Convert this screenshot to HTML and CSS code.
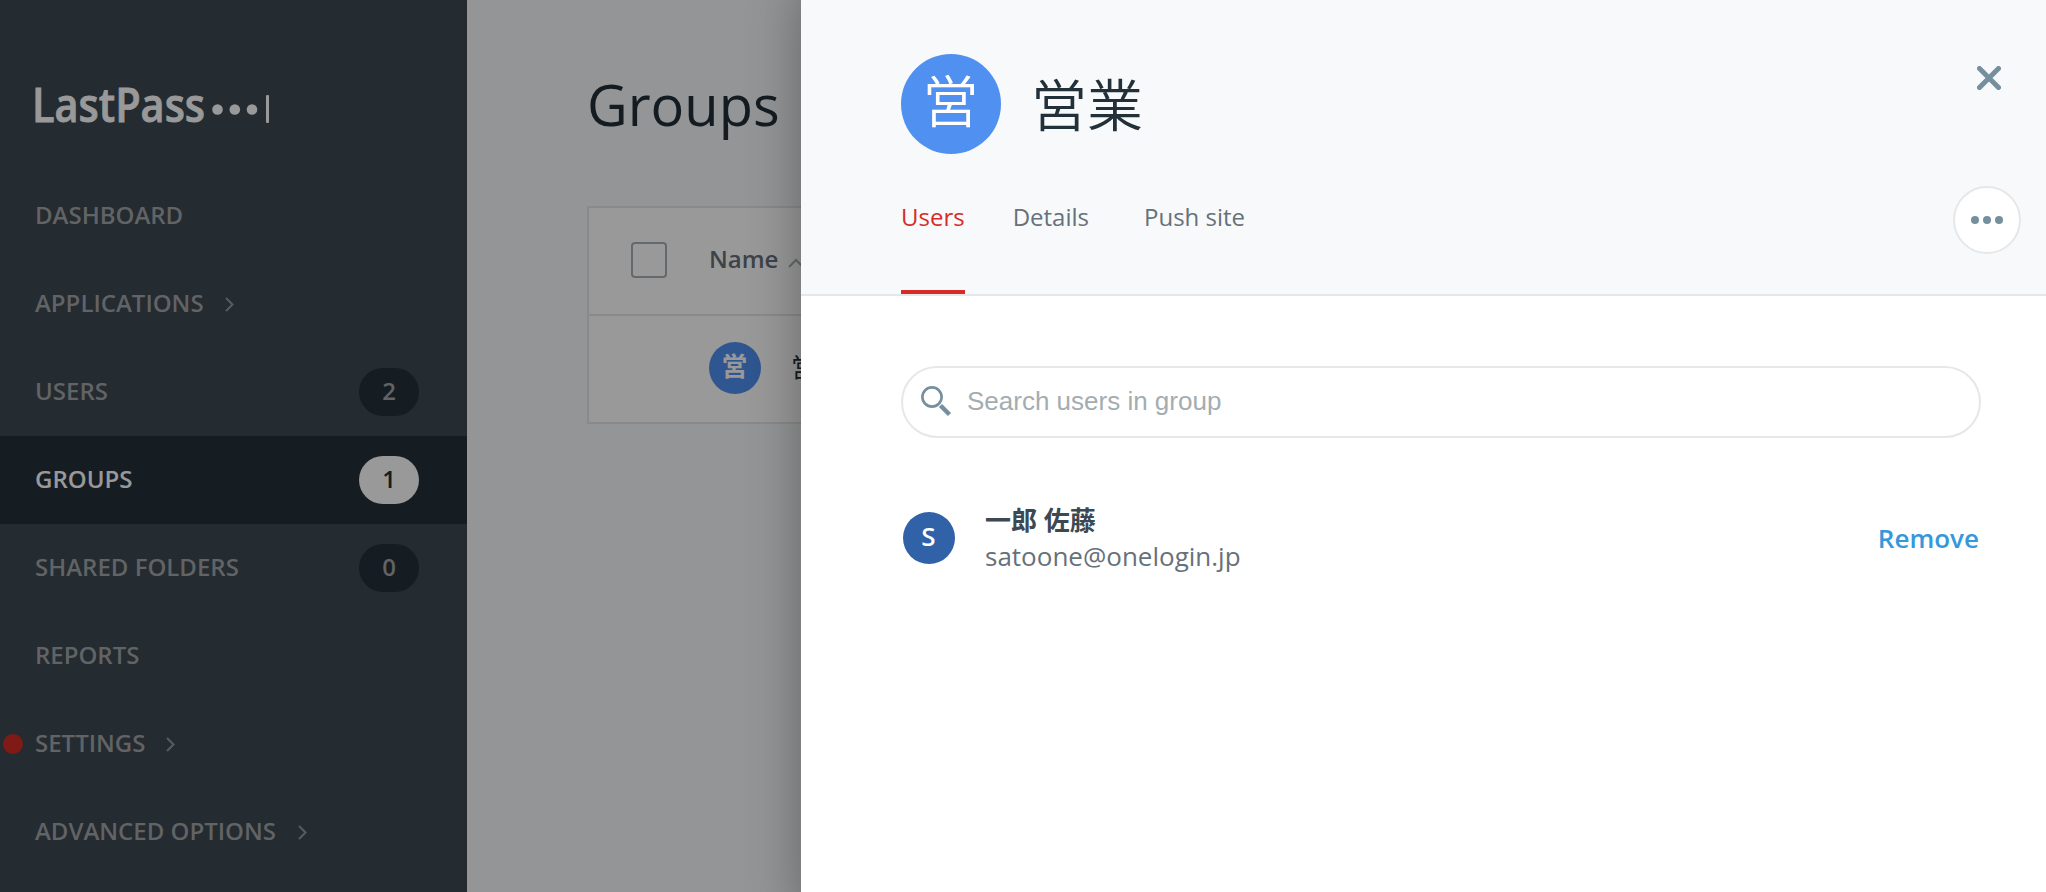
FILE: index.html
```
<!DOCTYPE html>
<html lang="en">
<head>
    <meta charset="UTF-8">
    <title>Groups</title>
    <link rel="stylesheet" href="styles.css">
</head>
<body>
    <div class="page">
        <div class="sidebar">
            <svg class="logo" width="250" height="80" viewBox="0 0 250 80">
                <text x="10" y="55.500" textLength="173" lengthAdjust="spacingAndGlyphs">LastPass</text>
                <circle cx="195.500" cy="43.500" r="5.300"/>
                <circle cx="212.800" cy="43.500" r="5.300"/>
                <circle cx="230" cy="43.500" r="5.300"/>
                <rect x="244" y="29" width="3" height="28" rx="1"/>
            </svg>
            <ul class="nav">
                <li>DASHBOARD</li>
                <li>APPLICATIONS <svg class="arrow" width="9" height="15" viewBox="0 0 9 15"><path d="M1 1l6.500 6.500L1 14"/></svg></li>
                <li>USERS <span class="count">2</span></li>
                <li class="active">GROUPS <span class="count">1</span></li>
                <li>SHARED FOLDERS <span class="count">0</span></li>
                <li>REPORTS</li>
                <li class="alert">SETTINGS <svg class="arrow" width="9" height="15" viewBox="0 0 9 15"><path d="M1 1l6.500 6.500L1 14"/></svg></li>
                <li>ADVANCED OPTIONS <svg class="arrow last" width="9" height="15" viewBox="0 0 9 15"><path d="M1 1l6.500 6.500L1 14"/></svg></li>
            </ul>
        </div>
        <div class="main">
            <h1>Groups</h1>
            <div class="table">
                <div class="row head">
                    <span class="checkbox"></span>
                    <span class="name">Name</span>
                    <svg class="sort" width="16" height="10" viewBox="0 0 16 10"><path d="M1 9l7-7 7 7"/></svg>
                </div>
                <div class="row">
                    <span class="avatar small">営</span>
                    <span class="group">営業</span>
                </div>
            </div>
        </div>
    </div>
    <div class="overlay"></div>
    <div class="drawer">
        <div class="drawer-head">
            <div class="title">
                <span class="avatar">営</span>
                <h2>営業</h2>
                <svg class="close" width="24" height="24" viewBox="0 0 24 24"><path d="M2.500 2.500l19 19M21.500 2.500l-19 19"/></svg>
            </div>
            <div class="tabs">
                <span class="tab current">Users</span>
                <span class="tab details">Details</span>
                <span class="tab">Push site</span>
                <span class="more"><i></i><i></i><i></i></span>
            </div>
        </div>
        <div class="drawer-body">
            <div class="search">
                <svg width="32" height="32" viewBox="0 0 32 32"><circle cx="12" cy="12" r="9.600"/><path class="handle" d="M20.500 20.500l9 9"/></svg>
                <input type="text" placeholder="Search users in group">
            </div>
            <div class="user">
                <span class="avatar small dark">S</span>
                <div class="info">
                    <div class="fullname">一郎 佐藤</div>
                    <div class="email">satoone@onelogin.jp</div>
                </div>
                <span class="remove">Remove</span>
            </div>
        </div>
    </div>
</body>
</html>
```

FILE: styles.css
```
*{
    padding: 0;
    margin: 0;
    box-sizing: border-box;
}
body {
    height: 892px;
    overflow: hidden;
    position: relative;
    font-family: "Open Sans", "Noto Sans CJK JP", sans-serif;
    font-size: 24px;
    color: #22303a;
}
.page {
    display: flex;
    height: 892px;
}
.sidebar {
    width: 467px;
    background: #3c4853;
    padding-top: 66px;
}
.logo {
    display: block;
    margin: 0 0 26px 22px;
    fill: #fff;
}
.logo text {
    font-size: 47px;
    font-weight: 600;
    stroke: #fff;
    stroke-width: 0.8;
}
.nav {
    list-style: none;
}
.nav li {
    display: flex;
    align-items: center;
    height: 88px;
    padding: 0 48px 3px 35px;
    color: #a3a5a7;
    font-weight: 600;
    position: relative;
}
.nav .active {
    background: #232f3a;
    color: #fff;
}
.arrow {
    margin: 4px 0 0 21px;
    fill: none;
    stroke: #929a9f;
    stroke-width: 2;
}
.arrow.last {
    margin-left: 22px;
}
.count {
    width: 60px;
    height: 48px;
    margin: 3px 0 0 auto;
    border-radius: 24px;
    background: #232f3a;
    line-height: 46px;
    text-align: center;
}
.active .count {
    background: #fff;
    color: #232f3a;
}
.alert::before {
    content: "";
    position: absolute;
    left: 3px;
    top: 34px;
    width: 20px;
    height: 20px;
    border-radius: 50%;
    background: #d62c25;
}
.main {
    flex: 1;
    background: #f7f9fb;
    padding: 66px 60px 0 120px;
}
h1 {
    height: 140px;
    font-size: 56px;
    font-weight: 400;
    line-height: 76px;
}
.table {
    border: 2px solid #e7e7e7;
    background: #fff;
}
.row {
    display: flex;
    align-items: center;
    height: 106px;
    padding: 0 0 2px 120px;
}
.head {
    height: 108px;
    padding-left: 42px;
    border-bottom: 2px solid #e7e7e7;
}
.checkbox {
    width: 36px;
    height: 36px;
    margin-right: 42px;
    border: 2px solid #a6afb6;
    border-radius: 4px;
}
.name {
    margin-top: -3px;
    color: #66717a;
    font-weight: 600;
}
.sort {
    margin: 5px 0 0 10px;
    fill: none;
    stroke: #a6afb6;
    stroke-width: 2;
}
.group {
    margin: -4px 0 0 30px;
    font-size: 26px;
}
.avatar {
    width: 100px;
    height: 100px;
    padding-right: 1px;
    border-radius: 50%;
    background: #4f90f1;
    color: #fff;
    font-size: 56px;
    font-weight: 350;
    line-height: 92px;
    text-align: center;
}
.avatar.small {
    width: 52px;
    height: 52px;
    padding-right: 1px;
    font-size: 26px;
    font-weight: 600;
    line-height: 48px;
}
.avatar.dark {
    background: #3161a7;
}
.overlay {
    position: absolute;
    left: 0;
    top: 0;
    width: 100%;
    height: 100%;
    background: rgba(0,0,0,0.4);
}
.drawer {
    position: absolute;
    right: 0;
    top: 0;
    width: 1245px;
    height: 892px;
    background: #fff;
    box-shadow: 20px 5px 50px 20px rgba(0,0,0,0.33);
}
.drawer-head {
    height: 296px;
    padding: 54px 25px 0 100px;
    background: #f7f9fb;
    border-bottom: 2px solid #e6e7e9;
}
.title {
    display: flex;
    height: 100px;
}
h2 {
    margin-left: 30px;
    font-size: 56px;
    font-weight: 350;
    line-height: 100px;
}
.close {
    margin: 12px 20px 0 auto;
    fill: none;
    stroke: #768f9e;
    stroke-width: 5;
    stroke-linecap: round;
}
.tabs {
    display: flex;
    height: 140px;
    color: #66717a;
}
.tab {
    height: 140px;
    margin-right: 48px;
    padding-top: 46px;
}
.details {
    margin-right: 55px;
}
.current {
    border-bottom: 4px solid #d62c25;
    color: #d62c25;
}
.more {
    display: flex;
    align-items: center;
    justify-content: center;
    gap: 4px;
    width: 68px;
    height: 68px;
    margin: 32px 0 0 auto;
    border: 2px solid #e6e7e9;
    border-radius: 50%;
    background: #fff;
}
.more i {
    width: 8px;
    height: 8px;
    border-radius: 50%;
    background: #768f9e;
}
.drawer-body {
    padding: 70px 65px 0 100px;
}
.search {
    display: flex;
    align-items: center;
    height: 72px;
    padding: 0 0 2px 17px;
    border: 2px solid #e7e7e7;
    border-radius: 36px;
}
.search svg {
    fill: none;
    stroke: #768f9e;
    stroke-width: 2.6;
}
.search .handle {
    stroke-width: 4.500;
}
.search input {
    flex: 1;
    margin-left: 15px;
    border: none;
    outline: none;
    background: none;
    font-family: "Liberation Sans", Arial, sans-serif;
    font-size: 26px;
}
.search input::placeholder {
    color: #a3adb1;
}
.user {
    display: flex;
    align-items: center;
    margin-top: 64px;
    padding: 0 2px;
}
.info {
    flex: 1;
    margin-left: 30px;
    font-size: 26px;
    line-height: 36px;
}
.fullname {
    color: #3c4853;
    font-weight: 600;
}
.email {
    color: #66717a;
}
.remove {
    color: #3498db;
    font-size: 26px;
    font-weight: 600;
}
```
